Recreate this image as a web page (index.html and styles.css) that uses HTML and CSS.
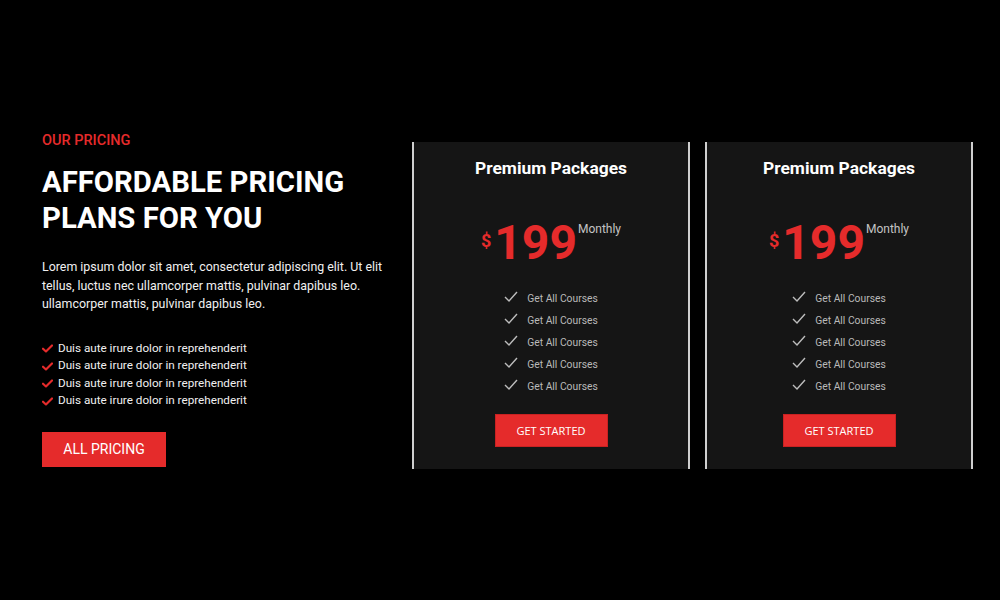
FILE: index.html
```html
<!DOCTYPE html>
<html lang="en">
<head>
<meta charset="utf-8">
<title>Pricing</title>
<link rel="stylesheet" href="styles.css">
</head>
<body>
<main class="pricing">
  <section class="intro">
    <div class="eyebrow">OUR PRICING</div>
    <h1 class="title">AFFORDABLE PRICING<br>PLANS FOR YOU</h1>
    <p class="lead">Lorem ipsum dolor sit amet, consectetur adipiscing elit. Ut elit tellus, luctus nec ullamcorper mattis, pulvinar dapibus leo. ullamcorper mattis, pulvinar dapibus leo.</p>
    <ul class="points">
      <li><svg class="rcheck" viewBox="0 0 12 10"><path d="M1 5.2 L4.3 8.3 L11 1.6" fill="none" stroke="#e52b2b" stroke-width="2.4" stroke-linecap="round" stroke-linejoin="round"/></svg>Duis aute irure dolor in reprehenderit</li>
      <li><svg class="rcheck" viewBox="0 0 12 10"><path d="M1 5.2 L4.3 8.3 L11 1.6" fill="none" stroke="#e52b2b" stroke-width="2.4" stroke-linecap="round" stroke-linejoin="round"/></svg>Duis aute irure dolor in reprehenderit</li>
      <li><svg class="rcheck" viewBox="0 0 12 10"><path d="M1 5.2 L4.3 8.3 L11 1.6" fill="none" stroke="#e52b2b" stroke-width="2.4" stroke-linecap="round" stroke-linejoin="round"/></svg>Duis aute irure dolor in reprehenderit</li>
      <li><svg class="rcheck" viewBox="0 0 12 10"><path d="M1 5.2 L4.3 8.3 L11 1.6" fill="none" stroke="#e52b2b" stroke-width="2.4" stroke-linecap="round" stroke-linejoin="round"/></svg>Duis aute irure dolor in reprehenderit</li>
    </ul>
    <a class="btn-all" href="#">ALL PRICING</a>
  </section>

  <div class="cards">
    <article class="card card-a">
      <h2 class="card-title">Premium Packages</h2>
      <div class="price"><span class="cur">$</span><span class="amount">199</span><span class="period">Monthly</span></div>
      <ul class="features">
        <li><svg class="gcheck" viewBox="0 0 14 11"><path d="M1 6 L5 10 L13 1" fill="none" stroke="#bdbdbd" stroke-width="1.4"/></svg>Get All Courses</li>
        <li><svg class="gcheck" viewBox="0 0 14 11"><path d="M1 6 L5 10 L13 1" fill="none" stroke="#bdbdbd" stroke-width="1.4"/></svg>Get All Courses</li>
        <li><svg class="gcheck" viewBox="0 0 14 11"><path d="M1 6 L5 10 L13 1" fill="none" stroke="#bdbdbd" stroke-width="1.4"/></svg>Get All Courses</li>
        <li><svg class="gcheck" viewBox="0 0 14 11"><path d="M1 6 L5 10 L13 1" fill="none" stroke="#bdbdbd" stroke-width="1.4"/></svg>Get All Courses</li>
        <li><svg class="gcheck" viewBox="0 0 14 11"><path d="M1 6 L5 10 L13 1" fill="none" stroke="#bdbdbd" stroke-width="1.4"/></svg>Get All Courses</li>
      </ul>
      <a class="btn-start" href="#">GET STARTED</a>
    </article>

    <article class="card card-b">
      <h2 class="card-title">Premium Packages</h2>
      <div class="price"><span class="cur">$</span><span class="amount">199</span><span class="period">Monthly</span></div>
      <ul class="features">
        <li><svg class="gcheck" viewBox="0 0 14 11"><path d="M1 6 L5 10 L13 1" fill="none" stroke="#bdbdbd" stroke-width="1.4"/></svg>Get All Courses</li>
        <li><svg class="gcheck" viewBox="0 0 14 11"><path d="M1 6 L5 10 L13 1" fill="none" stroke="#bdbdbd" stroke-width="1.4"/></svg>Get All Courses</li>
        <li><svg class="gcheck" viewBox="0 0 14 11"><path d="M1 6 L5 10 L13 1" fill="none" stroke="#bdbdbd" stroke-width="1.4"/></svg>Get All Courses</li>
        <li><svg class="gcheck" viewBox="0 0 14 11"><path d="M1 6 L5 10 L13 1" fill="none" stroke="#bdbdbd" stroke-width="1.4"/></svg>Get All Courses</li>
        <li><svg class="gcheck" viewBox="0 0 14 11"><path d="M1 6 L5 10 L13 1" fill="none" stroke="#bdbdbd" stroke-width="1.4"/></svg>Get All Courses</li>
      </ul>
      <a class="btn-start" href="#">GET STARTED</a>
    </article>
  </div>
</main>
</body>
</html>
```

FILE: styles.css
```css
* { box-sizing: border-box; }

html, body {
  margin: 0;
  padding: 0;
  background: #000;
  width: 1000px;
  height: 600px;
  overflow: hidden;
}

body {
  font-family: Roboto, "Liberation Sans", sans-serif;
  color: #fff;
}

.pricing {
  display: flex;
  align-items: flex-start;
  padding: 133px 0 0 42px;
}

/* ---------- left column ---------- */
.intro {
  width: 370px;
  flex: none;
  padding-right: 20px;
}

.eyebrow {
  color: #e52b2b;
  font-size: 14.5px;
  font-weight: 500;
  line-height: 16px;
}

.title {
  margin: 15px 0 0;
  font-size: 29.3px;
  font-weight: 700;
  line-height: 36px;
  color: #fff;
}

.lead {
  margin: 22px 0 0;
  font-size: 12.4px;
  line-height: 18.6px;
  color: #f0f0f0;
}

.points {
  list-style: none;
  margin: 26px 0 0;
  padding: 0;
}

.points li {
  display: flex;
  align-items: center;
  font-size: 11.7px;
  line-height: 17.5px;
  color: #f0f0f0;
}

.rcheck {
  width: 11px;
  height: 9px;
  margin-right: 5px;
  flex: none;
}

.btn-all {
  display: inline-flex;
  align-items: center;
  justify-content: center;
  margin-top: 22px;
  width: 124px;
  height: 35px;
  background: #e52b2b;
  color: #fff;
  font-size: 14px;
  text-decoration: none;
}

/* ---------- cards ---------- */
.cards {
  display: flex;
  gap: 15px;
  margin-top: 9px;
}

.card {
  background: #151515;
  border-left: 2px solid #cfcfcf;
  border-right: 2px solid #cfcfcf;
  display: flex;
  flex-direction: column;
  align-items: center;
  padding: 15px 0 22px;
}

.card-a { width: 278px; }
.card-b { width: 268px; }

.card-title {
  margin: 0;
  font-size: 17.4px;
  font-weight: 700;
  line-height: 22px;
  color: #fff;
}

.price {
  display: flex;
  align-items: flex-start;
  margin-top: 40px;
  height: 48px;
}

.cur {
  color: #e52b2b;
  font-size: 18px;
  font-weight: 700;
  line-height: 18px;
  margin-top: 13px;
  margin-right: 3px;
}

.amount {
  color: #e52b2b;
  font-size: 48px;
  font-weight: 700;
  line-height: 48px;
  margin-right: 1px;
}

.period {
  color: #c4c4c4;
  font-size: 12px;
  line-height: 14px;
  margin-top: 3px;
}

.features {
  list-style: none;
  margin: 21px 0 0;
  padding: 0;
}

.features li {
  display: flex;
  align-items: center;
  font-size: 10.3px;
  line-height: 22px;
  color: #b9b9b9;
}

.gcheck {
  width: 14px;
  height: 11px;
  margin-right: 9px;
  margin-top: -6px;
  flex: none;
}

.btn-start {
  margin-top: 16px;
  width: 113px;
  height: 33px;
  display: flex;
  align-items: center;
  justify-content: center;
  background: #e52b2b;
  border: 1px solid #c92222;
  color: #fff;
  font-family: "Open Sans", "Liberation Sans", sans-serif;
  font-size: 11px;
  text-decoration: none;
}
```
